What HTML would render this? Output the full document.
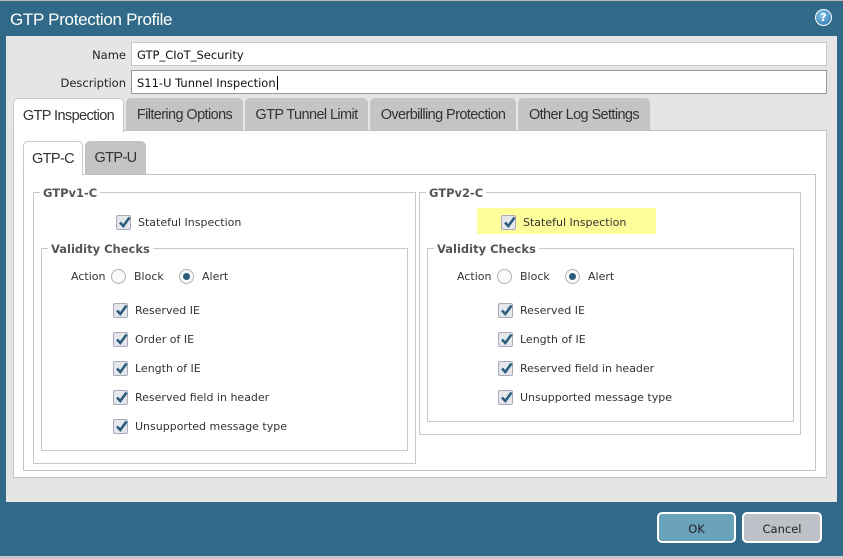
<!DOCTYPE html>
<html><head><style>
*{margin:0;padding:0;box-sizing:border-box}
body{width:843px;height:559px;overflow:hidden;background:#316a88;font-family:"DejaVu Sans","Liberation Sans",sans-serif;position:relative;font-size:11px;color:#222}
.a{position:absolute}
.title{left:10px;top:10px;color:#fff;font-family:"Liberation Sans",sans-serif;font-size:17px;letter-spacing:-0.3px}
.panel{left:6px;top:36px;width:831px;height:466px;background:#e5e5e5}
.inp{background:#fff;border:1px solid #c8c8c8;height:24px;font-size:11.5px;padding:5px 0 0 5px;color:#111}
.lbl{font-size:11.5px;color:#222;text-align:right}
.tab{top:98px;height:33px;background:#c4c4c4;border-radius:5px 5px 0 0;font-family:"Liberation Sans",sans-serif;font-size:14.5px;color:#333;text-align:center;padding-top:9px;letter-spacing:-0.6px}
.tab.on{background:#fff;border:1px solid #c8c8c8;border-bottom:none;height:34px}
.box{background:#fff;border:1px solid #c4c4c4}
.fs{border:1px solid #c8c8c8}
.lg{background:#fff;font-weight:bold;color:#555;font-size:11.5px;padding:0 3px}
.cb{width:15px;height:15px;border:1px solid #aab;background:#e4e8ec;border-radius:2px}
.cb svg{position:absolute;left:0;top:-1px}
.t{font-size:11px;color:#333;white-space:nowrap}
.rd{width:15px;height:15px;border:1px solid #b0b0b0;border-radius:50%;background:#fafafa}
.rd.on::after{content:"";position:absolute;left:3px;top:3px;width:7px;height:7px;border-radius:50%;background:#2c5d7c}
.btn{top:512px;height:31px;border:2px solid #fff;border-radius:5px;text-align:center;padding-top:8px;font-size:11.5px;color:#222}
</style></head><body>
<div class="a" style="left:0;top:0;width:843px;height:1px;background:#bbb"></div>
<div class="a title">GTP Protection Profile</div>
<div class="a" style="left:815px;top:9px;width:17px;height:17px;border-radius:50%;background:radial-gradient(circle at 40% 35%,#8cc6ea,#1f6fa8);border:1px solid #fff;color:#fff;font-size:11px;font-weight:bold;text-align:center;line-height:15px">?</div>
<div class="a panel"></div>
<div class="a lbl" style="left:40px;top:48px;width:86px">Name</div>
<div class="a inp" style="left:131px;top:42px;width:696px">GTP_CIoT_Security</div>
<div class="a lbl" style="left:20px;top:76px;width:106px">Description</div>
<div class="a inp" style="left:131px;top:70px;width:696px;border-color:#999">S11-U Tunnel Inspection<span style="border-left:1px solid #000;margin-left:1px"></span></div>
<div class="a box" style="left:13px;top:130px;width:814px;height:348px"></div>
<div class="a tab on" style="left:13px;width:111px">GTP Inspection</div>
<div class="a tab" style="left:126px;width:117px">Filtering Options</div>
<div class="a tab" style="left:245px;width:123px">GTP Tunnel Limit</div>
<div class="a tab" style="left:370px;width:146px">Overbilling Protection</div>
<div class="a tab" style="left:518px;width:132px">Other Log Settings</div>
<div class="a box" style="left:23px;top:174px;width:793px;height:297px"></div>
<div class="a tab on" style="left:23px;top:141px;width:60px">GTP-C</div>
<div class="a tab" style="left:85px;top:141px;width:61px">GTP-U</div>

<div class="a fs" style="left:33px;top:192px;width:383px;height:272px"></div>
<div class="a lg" style="left:40px;top:186px">GTPv1-C</div>
<div class="a fs" style="left:419px;top:192px;width:382px;height:243px"></div>
<div class="a lg" style="left:426px;top:186px">GTPv2-C</div>
<div class="a fs" style="left:41px;top:248px;width:367px;height:203px"></div>
<div class="a lg" style="left:48px;top:242px">Validity Checks</div>
<div class="a fs" style="left:427px;top:248px;width:367px;height:174px"></div>
<div class="a lg" style="left:434px;top:242px">Validity Checks</div>
<div class="a" style="left:477px;top:208px;width:179px;height:26px;background:#fdfd9a"></div>

<div id="c"></div>
<div class="a btn" style="left:657px;width:79px;background:#6aa2bb">OK</div>
<div class="a btn" style="left:742px;width:80px;background:#bfc1c8">Cancel</div>
<div class="a" style="left:0;top:556px;width:843px;height:3px;background:#c8c8c8"></div>
<script>
var h='';
function cb(x,y,t){h+='<div class="a cb" style="left:'+x+'px;top:'+(y-7)+'px"><svg width="15" height="15" viewBox="0 0 15 15"><path d="M3 7.5L6.3 11L12.5 2.5" stroke="#2c5d7c" stroke-width="2.6" fill="none"/></svg></div><div class="a t" style="left:'+(x+22)+'px;top:'+(y-6)+'px">'+t+'</div>';}
function rd(x,y){h+='<div class="a t" style="left:'+x+'px;top:'+(y-6)+'px">Action</div><div class="a rd" style="left:'+(x+40)+'px;top:'+(y-7)+'px"></div><div class="a t" style="left:'+(x+63)+'px;top:'+(y-6)+'px">Block</div><div class="a rd on" style="left:'+(x+108)+'px;top:'+(y-7)+'px"></div><div class="a t" style="left:'+(x+131)+'px;top:'+(y-6)+'px">Alert</div>';}
cb(116,222,'Stateful Inspection');rd(71,276);
['Reserved IE','Order of IE','Length of IE','Reserved field in header','Unsupported message type'].forEach(function(t,i){cb(113,310+29*i,t)});
cb(501,222,'Stateful Inspection');rd(457,276);
['Reserved IE','Length of IE','Reserved field in header','Unsupported message type'].forEach(function(t,i){cb(498,310+29*i,t)});
document.getElementById('c').innerHTML=h;
</script>
</body></html>
